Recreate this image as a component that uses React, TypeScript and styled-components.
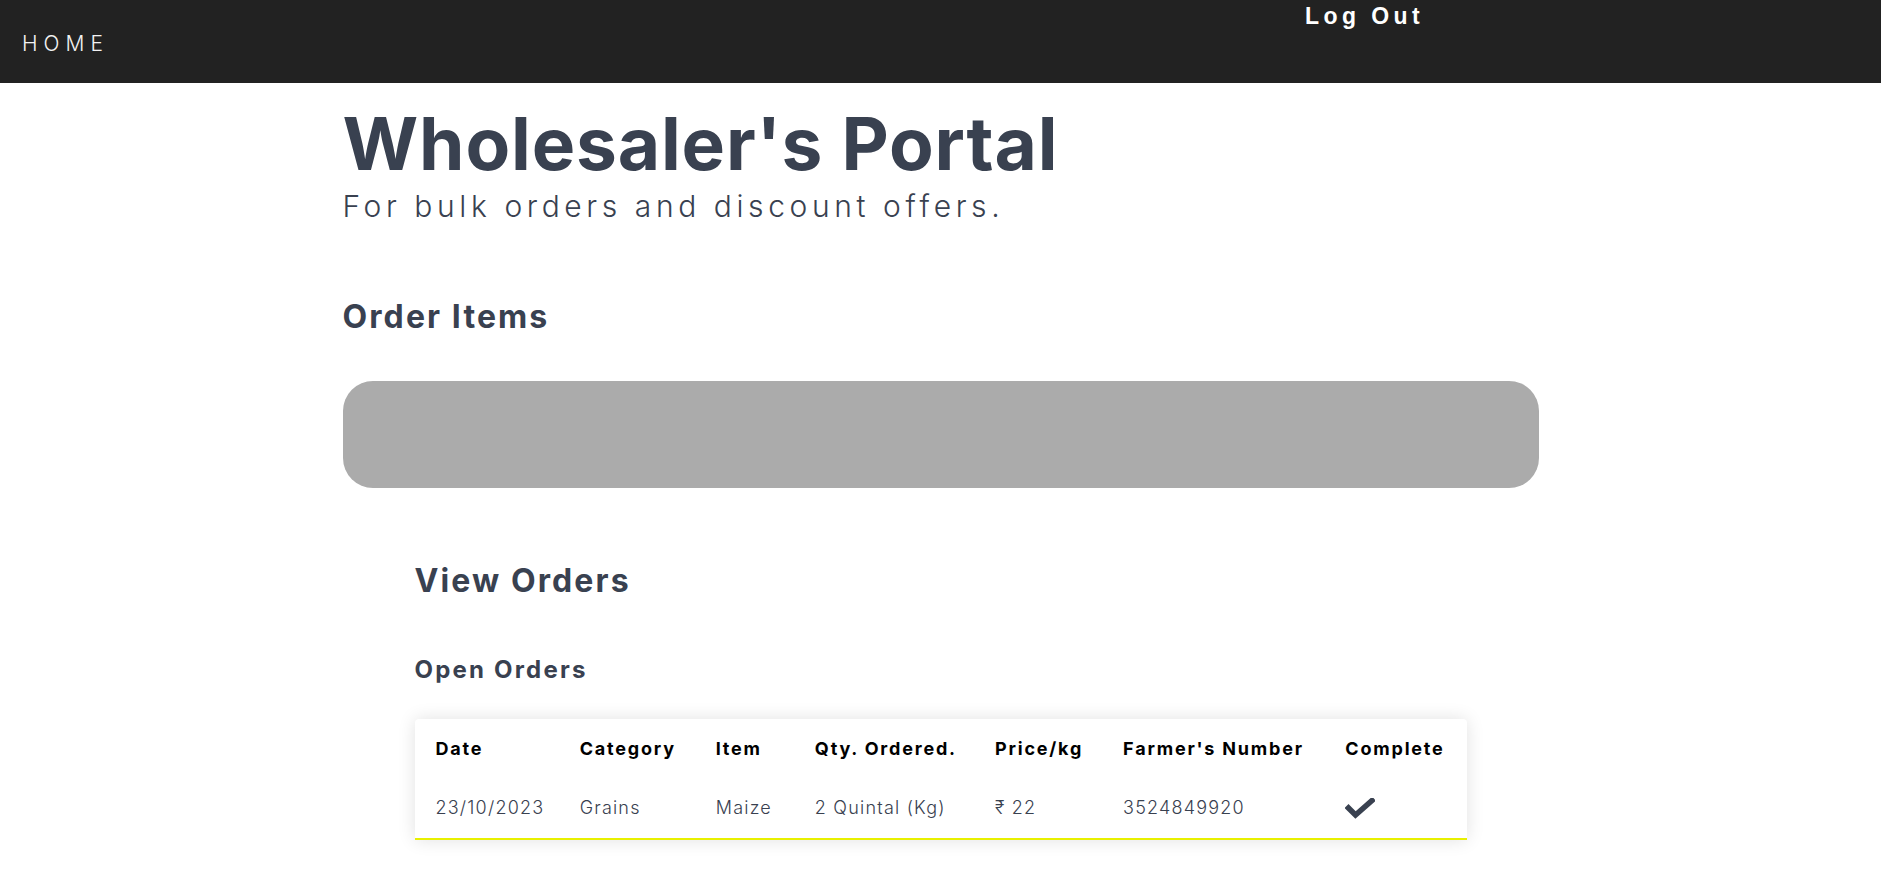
import React from "react";
import styled, { createGlobalStyle } from "styled-components";

const Global = createGlobalStyle`
  html, body { margin: 0; padding: 0; background: #ffffff; }
  body { font-family: Inter, "Noto Sans", sans-serif; color: #394150; }
  * { box-sizing: border-box; }
`;

const NavBar = styled.nav`
  height: 83px;
  background: #222222;
  display: flex;
  align-items: center;
  padding-left: 22px;
`;

const HomeLink = styled.a`
  color: #f2f2f2;
  font-family: Inter, sans-serif;
  font-weight: 300;
  font-size: 21px;
  letter-spacing: 6px;
  line-height: 1;
  text-decoration: none;
  margin-top: 4px;
`;

const LogOut = styled.button`
  align-self: flex-start;
  margin-left: auto;
  margin-right: 457px;
  margin-top: 3px;
  padding: 0;
  background: none;
  border: none;
  color: #ffffff;
  font-family: "Liberation Sans", Arial, sans-serif;
  font-weight: 700;
  font-size: 23px;
  letter-spacing: 4.4px;
  line-height: 1.2;
  cursor: pointer;
`;

const Main = styled.main`
  max-width: 1196px;
  margin: 0 auto;
  padding-bottom: 40px;
`;

const Title = styled.h1`
  margin: 24px 0 0;
  font-size: 73px;
  line-height: 1;
  font-weight: 700;
  letter-spacing: 0.85px;
  color: #394150;
`;

const Subtitle = styled.p`
  margin: 11px 0 0;
  font-size: 30px;
  line-height: 1;
  font-weight: 300;
  letter-spacing: 4.6px;
  color: #394150;
`;

const SectionTitle = styled.h2<{ $top: number }>`
  margin: ${(p) => p.$top}px 0 0;
  font-size: 32px;
  line-height: 1;
  font-weight: 700;
  letter-spacing: 2.1px;
  color: #394150;
`;

const SubTitle = styled.h3`
  margin: 61px 0 0;
  font-size: 24px;
  line-height: 1;
  font-weight: 700;
  letter-spacing: 2.2px;
  color: #394150;
`;

const OrderBar = styled.div`
  margin-top: 48px;
  height: 107px;
  background: #ababab;
  border-radius: 30px;
`;

const OrdersSection = styled.section`
  padding: 0 72px;
`;

const Card = styled.div`
  margin-top: 37px;
  background: #ffffff;
  border-radius: 4px 4px 0 0;
  box-shadow: 0 0 18px rgba(0, 0, 0, 0.12);
  border-bottom: 2px solid #e8f000;
`;

const Table = styled.table`
  width: 100%;
  border-collapse: collapse;
  table-layout: fixed;
`;

const HeadCell = styled.th<{ $w: number }>`
  width: ${(p) => p.$w}px;
  height: 58px;
  padding: 0 0 0 21px;
  text-align: left;
  vertical-align: middle;
  font-size: 18px;
  font-weight: 700;
  letter-spacing: 1.8px;
  color: #000000;
  white-space: nowrap;
`;

const Cell = styled.td`
  height: 61px;
  padding: 0 0 0 21px;
  vertical-align: middle;
  font-size: 18px;
  font-weight: 300;
  letter-spacing: 1.2px;
  color: #394150;
  white-space: nowrap;
`;

const Check = () => (
  <svg width="30" height="22" viewBox="0 0 30 22" style={{ display: "block", marginTop: 2 }}>
    <polyline
      points="3.5,10 10.5,17 27,2.5"
      fill="none"
      stroke="#394150"
      strokeWidth="5.5"
      strokeLinecap="square"
    />
  </svg>
);

const columns: { label: string; w: number }[] = [
  { label: "Date", w: 144 },
  { label: "Category", w: 136 },
  { label: "Item", w: 99 },
  { label: "Qty. Ordered.", w: 180 },
  { label: "Price/kg", w: 128 },
  { label: "Farmer's Number", w: 222 },
  { label: "Complete", w: 142 },
];

const rows = [
  {
    date: "23/10/2023",
    category: "Grains",
    item: "Maize",
    qty: "2 Quintal (Kg)",
    price: "₹ 22",
    farmer: "3524849920",
  },
];

export default function App() {
  return (
    <>
      <Global />
      <NavBar>
        <HomeLink href="#">HOME</HomeLink>
        <LogOut>Log Out</LogOut>
      </NavBar>
      <Main>
        <Title>Wholesaler's Portal</Title>
        <Subtitle>For bulk orders and discount offers.</Subtitle>
        <SectionTitle $top={80}>Order Items</SectionTitle>
        <OrderBar />
        <OrdersSection>
          <SectionTitle $top={77}>View Orders</SectionTitle>
          <SubTitle>Open Orders</SubTitle>
          <Card>
            <Table>
              <thead>
                <tr>
                  {columns.map((c) => (
                    <HeadCell key={c.label} $w={c.w}>
                      {c.label}
                    </HeadCell>
                  ))}
                </tr>
              </thead>
              <tbody>
                {rows.map((r) => (
                  <tr key={r.farmer}>
                    <Cell>{r.date}</Cell>
                    <Cell>{r.category}</Cell>
                    <Cell>{r.item}</Cell>
                    <Cell>{r.qty}</Cell>
                    <Cell>{r.price}</Cell>
                    <Cell>{r.farmer}</Cell>
                    <Cell>
                      <Check />
                    </Cell>
                  </tr>
                ))}
              </tbody>
            </Table>
          </Card>
        </OrdersSection>
      </Main>
    </>
  );
}
